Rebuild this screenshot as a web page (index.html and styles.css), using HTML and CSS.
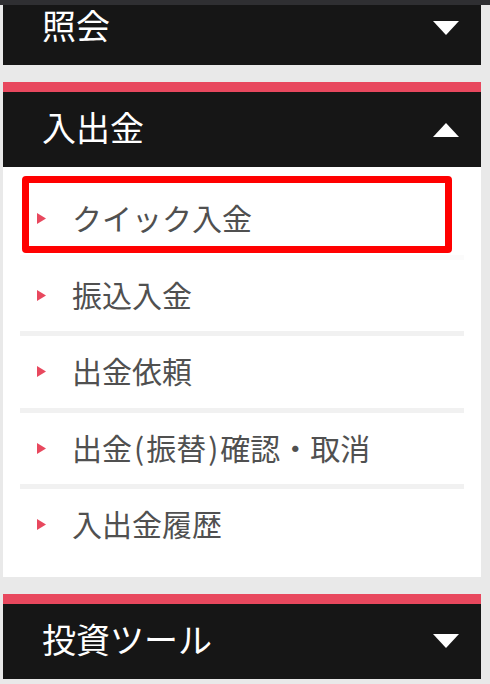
FILE: index.html
```html
<!DOCTYPE html>
<html lang="ja">
<head>
<meta charset="utf-8">
<title>メニュー</title>
<link rel="stylesheet" href="styles.css">
</head>
<body>
<div class="topbar"></div>
<nav class="menu">
  <section class="section">
    <div class="head head-clipped">
      <span class="head-title">照会</span>
      <svg class="caret" width="26" height="14" viewBox="0 0 26 14"><polygon points="0,0 26,0 13,14" fill="#fff"/></svg>
    </div>
  </section>
  <section class="section">
    <div class="head">
      <span class="head-title">入出金</span>
      <svg class="caret" width="26" height="14" viewBox="0 0 26 14"><polygon points="0,14 26,14 13,0" fill="#fff"/></svg>
    </div>
    <ul class="panel">
      <li class="item item-marked"><svg class="bullet" width="9" height="11" viewBox="0 0 9 11"><polygon points="0,0 9,5.5 0,11" fill="#e8485e"/></svg><span>クイック入金</span></li>
      <li class="item"><svg class="bullet" width="9" height="11" viewBox="0 0 9 11"><polygon points="0,0 9,5.5 0,11" fill="#e8485e"/></svg><span>振込入金</span></li>
      <li class="item"><svg class="bullet" width="9" height="11" viewBox="0 0 9 11"><polygon points="0,0 9,5.5 0,11" fill="#e8485e"/></svg><span>出金依頼</span></li>
      <li class="item"><svg class="bullet" width="9" height="11" viewBox="0 0 9 11"><polygon points="0,0 9,5.5 0,11" fill="#e8485e"/></svg><span>出金<span class="paren">(</span>振替<span class="paren">)</span>確認・取消</span></li>
      <li class="item"><svg class="bullet" width="9" height="11" viewBox="0 0 9 11"><polygon points="0,0 9,5.5 0,11" fill="#e8485e"/></svg><span>入出金履歴</span></li>
    </ul>
  </section>
  <section class="section">
    <div class="head">
      <span class="head-title">投資ツール</span>
      <svg class="caret" width="26" height="14" viewBox="0 0 26 14"><polygon points="0,0 26,0 13,14" fill="#fff"/></svg>
    </div>
  </section>
</nav>
</body>
</html>
```

FILE: styles.css
```css
html, body {
  margin: 0;
  padding: 0;
}
body {
  background: #e9e9e9;
  font-family: "Noto Sans CJK JP", "Noto Sans", sans-serif;
  overflow: hidden;
  height: 684px;
}
.topbar {
  height: 5px;
  background: #2f2f32;
}
.menu {
  display: flex;
  flex-direction: column;
  gap: 17px;
  padding: 0 9px 0 3px;
}
.head {
  display: flex;
  align-items: center;
  justify-content: space-between;
  height: 75px;
  box-sizing: content-box;
  border-top: 10px solid #e8485e;
  background: #161616;
  padding: 0 22px 0 39px;
}
.head-clipped {
  border-top: 0;
  height: 45px;
  padding-bottom: 15px;
}
.head-title {
  color: #fff;
  font-size: 34px;
  line-height: 40px;
  margin-top: -5px;
}
.caret {
  display: block;
}
.panel {
  list-style: none;
  margin: 0;
  background: #fff;
  padding: 16px 17px;
}
.item {
  display: flex;
  align-items: center;
  height: 71.5px;
  border-bottom: 5px solid #f1f1f1;
  color: #505050;
  font-size: 30px;
  position: relative;
}
.item:last-child {
  border-bottom: 0;
}
.item-marked {
  border-bottom-color: #fbfbfb;
}
.item > span {
  line-height: 36px;
  margin-top: -3px;
}
.paren {
  padding: 0 2px;
}
.bullet {
  display: block;
  margin: 0 26px 0 17px;
  flex: none;
}
.item-marked::after {
  content: "";
  position: absolute;
  top: -7px;
  bottom: 1.5px;
  left: 2px;
  right: 12px;
  border: 7px solid #ff0000;
  border-radius: 4px;
}
```
